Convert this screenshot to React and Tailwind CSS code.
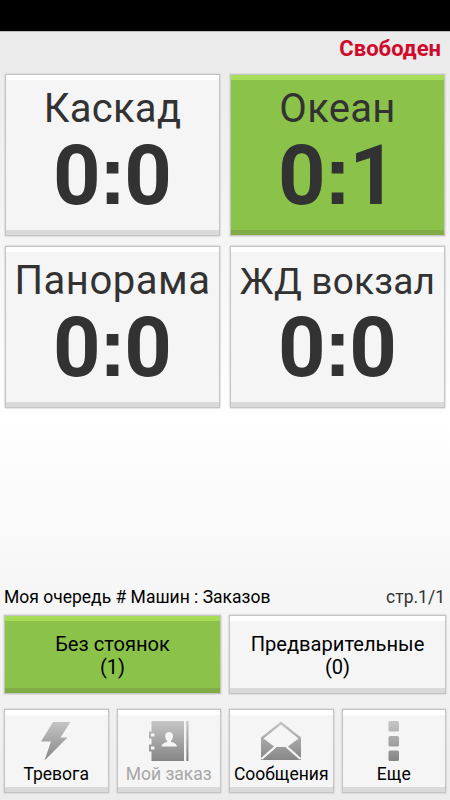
import clsx from "clsx";

const zones = [
    { id: 1, nome: "Каскад", carros: 0, pedidos: 0, size: "text-[40px] tracking-[0.3px]" },
    { id: 2, nome: "Океан", carros: 0, pedidos: 1, size: "text-[40px] tracking-[0.3px]", active: true },
    { id: 3, nome: "Панорама", carros: 0, pedidos: 0, size: "text-[40px] tracking-[0.5px]" },
    { id: 4, nome: "ЖД вокзал", carros: 0, pedidos: 0, size: "text-[37px] tracking-[0.2px] pt-px" },
];

function Tile({ active, className, children }) {
    return (
        <button
            className={clsx(
                "flex flex-col items-center border-y-[5px] shadow-[0_0_1px_1px_#c4c4c4,0_0_2px_1px_#cccccc]",
                active
                    ? "bg-[#8bc34a] border-t-[#a6dd56] border-b-[#80ab45]"
                    : "bg-[#f5f5f5] border-t-white border-b-[#dadada]",
                className
            )}
        >
            {children}
        </button>
    );
}

function Gradient({ id }) {
    return (
        <defs>
            <linearGradient id={id} x1="0" y1="0" x2="0" y2="40" gradientUnits="userSpaceOnUse">
                <stop offset="0" stopColor="#c6c6c6" />
                <stop offset="1" stopColor="#858585" />
            </linearGradient>
        </defs>
    );
}

function BoltIcon() {
    return (
        <svg width="40" height="40" viewBox="0 0 40 40">
            <Gradient id="bolt" />
            <path d="M17 1H34.5L24.5 16.5H31.5L8.5 39.5L15 20.5H5Z" fill="url(#bolt)" />
        </svg>
    );
}

function ContactsIcon() {
    return (
        <svg width="40" height="40" viewBox="0 0 40 40">
            <Gradient id="book" />
            <path d="M2.5 0H35V40H2.5V30.5H0V23.5H2.5V17.5H0V10.5H2.5Z" fill="url(#book)" />
            <path d="M37.3 0H39.5V40H37.3Z" fill="url(#book)" />
            <path d="M2 12.5H5.5V15.5H2ZM2 25.5H5.5V28.5H2Z" fill="#f5f5f5" />
            <path d="M20 11C22.7 11 24 12.8 24 15C24 17.2 23.2 18.8 22 19.8V21C25 21.8 27.8 22.5 28 25.5H12.5C12.7 22.5 15.5 21.8 18.2 21V19.8C17 18.8 16.2 17.2 16.2 15C16.2 12.8 17.4 11 20 11Z" fill="#f5f5f5" />
        </svg>
    );
}

function MailIcon() {
    return (
        <svg width="40" height="40" viewBox="0 0 40 40">
            <Gradient id="mail" />
            <path fillRule="evenodd" d="M20 0.5L40 16.5V39H0V16.5ZM20 3.5L2.5 17.5L13.8 26H26.2L37.5 17.5Z" fill="url(#mail)" />
            <path d="M0.5 38L14.5 25.7M39.5 38L25.5 25.7" stroke="#f5f5f5" strokeWidth="2.2" fill="none" />
        </svg>
    );
}

function MoreIcon() {
    return (
        <svg width="40" height="40" viewBox="0 0 40 40">
            <Gradient id="more" />
            <g fill="url(#more)">
                <rect x="14.5" y="0" width="10.5" height="10.5" rx="1.5" />
                <rect x="14.5" y="15" width="10.5" height="10.5" rx="1.5" />
                <rect x="14.5" y="29.5" width="10.5" height="10.5" rx="1.5" />
            </g>
        </svg>
    );
}

const menu = [
    { id: 1, label: "Тревога", Icon: BoltIcon },
    { id: 2, label: "Мой заказ", Icon: ContactsIcon, disabled: true },
    { id: 3, label: "Сообщения", Icon: MailIcon },
    { id: 4, label: "Еще", Icon: MoreIcon },
];

export default function App() {
    return (
        <div className="flex h-[800px] w-[450px] flex-col overflow-hidden bg-black font-[Roboto,sans-serif] text-black">
            <div className="h-[31px] shrink-0" />
            <div className="flex flex-1 flex-col border-t border-[#bdbdbd] bg-linear-to-b from-[#eaeaea] via-white via-50% to-[#ececec]">
                <div className="flex h-[43px] justify-end pr-[9px] pt-[3px]">
                    <span className="text-[22px] leading-[27px] font-bold text-[#cf0a2c]">Свободен</span>
                </div>
                <div className="grid grid-cols-2 gap-3 px-1.5">
                    {zones.map((zone) => (
                        <Tile key={zone.id} active={zone.active} className="h-[160px] text-[#323232]">
                            <span className={clsx("mt-[6px] h-[46px] leading-[46px] whitespace-nowrap", zone.size)}>{zone.nome}</span>
                            <span className="flex text-[83px] leading-[88px] font-bold">
                                {zone.carros}
                                <span className="-mx-[2px] font-[Liberation_Sans,sans-serif]">:</span>
                                {zone.pedidos}
                            </span>
                        </Tile>
                    ))}
                </div>
                <div className="mt-auto flex justify-between pl-1 pr-[5px] text-[17.5px] leading-5">
                    <span>Моя очередь # Машин : Заказов</span>
                    <span className="text-[#333]">стр.1/1</span>
                </div>
                <div className="mt-[9px] grid grid-cols-2 gap-[10px] px-[5px]">
                    <Tile active className="h-[77px] justify-center pt-0.5 text-[20.1px] leading-[23px]">
                        <span>Без стоянок</span>
                        <span>(1)</span>
                    </Tile>
                    <Tile className="h-[77px] justify-center pt-0.5 text-[20.1px] leading-[23px]">
                        <span>Предварительные</span>
                        <span>(0)</span>
                    </Tile>
                </div>
                <div className="mt-[17px] mb-2 grid grid-cols-4 gap-[10px] px-[5px]">
                    {menu.map(({ id, label, Icon, disabled }) => (
                        <Tile key={id} className="h-[82px] pt-1.5">
                            <Icon />
                            <span className={clsx("mt-[3px] text-[17.5px] leading-5 whitespace-nowrap", disabled && "text-[#a6a6a6]")}>{label}</span>
                        </Tile>
                    ))}
                </div>
            </div>
        </div>
    );
}
